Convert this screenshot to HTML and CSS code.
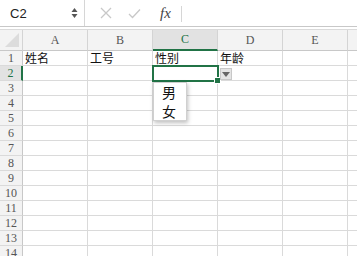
FILE: index.html
```html
<!DOCTYPE html>
<html>
<head>
<meta charset="utf-8">
<link rel="stylesheet" href="styles.css">
</head>
<body>
<div class="app">
  <div class="fbar">
    <div class="namebox">
      <span class="ref">C2</span>
      <span class="spin"><svg width="7" height="12" viewBox="0 0 7 12"><path d="M0.5 5 L3.5 1 L6.5 5 Z" fill="#555"/><path d="M0.5 7 L3.5 11 L6.5 7 Z" fill="#555"/></svg></span>
    </div>
    <div class="fbtns">
      <svg class="ic" width="12" height="12" viewBox="0 0 12 12"><path d="M1 1 L11 11 M11 1 L1 11" stroke="#c8c8c8" stroke-width="1.3" fill="none"/></svg>
      <svg class="ic" width="13" height="11" viewBox="0 0 13 11"><path d="M1 6 L4.5 9.5 L12 1.5" stroke="#c8c8c8" stroke-width="1.3" fill="none"/></svg>
      <span class="fx">fx</span>
    </div>
    <div class="finput"></div>
  </div>
  <div class="sheet">
    <div class="grid">
      <div class="corner"><span class="tri"></span></div>
      <div class="ch">A</div>
      <div class="ch">B</div>
      <div class="ch sel">C</div>
      <div class="ch">D</div>
      <div class="ch">E</div>
      <div class="ch last"></div>

      <div class="rh">1</div><div class="c">姓名</div><div class="c">工号</div><div class="c">性别</div><div class="c">年龄</div><div class="c"></div><div class="c last"></div>
      <div class="rh sel">2</div><div class="c"></div><div class="c"></div><div class="c"></div><div class="c"></div><div class="c"></div><div class="c last"></div>
      <div class="rh">3</div><div class="c"></div><div class="c"></div><div class="c"></div><div class="c"></div><div class="c"></div><div class="c last"></div>
      <div class="rh">4</div><div class="c"></div><div class="c"></div><div class="c"></div><div class="c"></div><div class="c"></div><div class="c last"></div>
      <div class="rh">5</div><div class="c"></div><div class="c"></div><div class="c"></div><div class="c"></div><div class="c"></div><div class="c last"></div>
      <div class="rh">6</div><div class="c"></div><div class="c"></div><div class="c"></div><div class="c"></div><div class="c"></div><div class="c last"></div>
      <div class="rh">7</div><div class="c"></div><div class="c"></div><div class="c"></div><div class="c"></div><div class="c"></div><div class="c last"></div>
      <div class="rh">8</div><div class="c"></div><div class="c"></div><div class="c"></div><div class="c"></div><div class="c"></div><div class="c last"></div>
      <div class="rh">9</div><div class="c"></div><div class="c"></div><div class="c"></div><div class="c"></div><div class="c"></div><div class="c last"></div>
      <div class="rh">10</div><div class="c"></div><div class="c"></div><div class="c"></div><div class="c"></div><div class="c"></div><div class="c last"></div>
      <div class="rh">11</div><div class="c"></div><div class="c"></div><div class="c"></div><div class="c"></div><div class="c"></div><div class="c last"></div>
      <div class="rh">12</div><div class="c"></div><div class="c"></div><div class="c"></div><div class="c"></div><div class="c"></div><div class="c last"></div>
      <div class="rh">13</div><div class="c"></div><div class="c"></div><div class="c"></div><div class="c"></div><div class="c"></div><div class="c last"></div>
      <div class="rh">14</div><div class="c"></div><div class="c"></div><div class="c"></div><div class="c"></div><div class="c"></div><div class="c last"></div>
    </div>
    <div class="selbox"><span class="handle"></span></div>
    <div class="ddbtn"><svg width="8" height="5" viewBox="0 0 8 5"><path d="M0 0 L8 0 L4 5 Z" fill="#666"/></svg></div>
    <div class="ddlist">
      <div class="opt">男</div>
      <div class="opt">女</div>
    </div>
  </div>
</div>
</body>
</html>
```
FILE: styles.css
```css
html, body {
  margin: 0;
  padding: 0;
  background: #fff;
}
.app {
  width: 357px;
  height: 256px;
  overflow: hidden;
  font-family: "Liberation Sans", Arial, sans-serif;
}
.fbar {
  display: flex;
  height: 26px;
  border-bottom: 1px solid #c8c8c8;
  box-sizing: content-box;
}
.namebox {
  width: 85px;
  border-right: 1px solid #d6d6d6;
  display: flex;
  align-items: center;
  justify-content: space-between;
  padding: 0 6px 0 10px;
  box-sizing: border-box;
}
.ref {
  font-size: 13px;
  color: #222;
}
.spin {
  display: flex;
  align-items: center;
}
.fbtns {
  width: 96px;
  display: flex;
  align-items: center;
  padding-left: 15px;
  gap: 16px;
  box-sizing: border-box;
}
.fx {
  font-family: "Liberation Serif", "Times New Roman", serif;
  font-style: italic;
  font-size: 15px;
  color: #444;
  margin-left: 3px;
}
.finput {
  flex: 1;
  margin: 6px 0 4px 0;
  border-left: 1px solid #d6d6d6;
}
.sheet {
  position: relative;
  margin-top: 2px;
  border-top: 1px solid #dadada;
}
.grid {
  display: grid;
  grid-template-columns: 23px repeat(5, 65px) 1fr;
  grid-template-rows: 21px repeat(14, 15px);
}
.corner, .ch {
  background: #f3f3f3;
  border-right: 1px solid #d4d4d4;
  border-bottom: 1px solid #c8c8c8;
  box-sizing: border-box;
}
.corner {
  position: relative;
}
.tri {
  position: absolute;
  right: 3px;
  bottom: 3px;
  width: 0;
  height: 0;
  border-left: 14px solid transparent;
  border-bottom: 14px solid #dcdcdc;
}
.ch {
  font-family: "Liberation Serif", "Times New Roman", serif;
  font-size: 12px;
  color: #555;
  display: flex;
  align-items: center;
  justify-content: center;
}
.ch.sel {
  background: #e2e2e2;
  color: #217346;
  border-bottom: 2px solid #217346;
}
.ch.last, .c.last {
  border-right: none;
}
.rh {
  background: #f3f3f3;
  border-right: 1px solid #c8c8c8;
  border-bottom: 1px solid #dadada;
  box-sizing: border-box;
  font-family: "Liberation Serif", "Times New Roman", serif;
  font-size: 12px;
  color: #555;
  display: flex;
  align-items: center;
  justify-content: center;
  line-height: 14px;
}
.rh.sel {
  background: #e2e2e2;
  color: #217346;
  border-right: 2px solid #217346;
}
.c {
  border-right: 1px solid #dadada;
  border-bottom: 1px solid #dadada;
  box-sizing: border-box;
  font-family: "Noto Sans CJK SC", sans-serif;
  font-size: 12px;
  line-height: 14px;
  color: #111;
  padding-left: 2px;
  white-space: nowrap;
}
.selbox {
  position: absolute;
  left: 152px;
  top: 35px;
  width: 67px;
  height: 17px;
  border: 2px solid #217346;
  box-sizing: border-box;
}
.handle {
  position: absolute;
  right: -4px;
  bottom: -4px;
  width: 5px;
  height: 5px;
  background: #217346;
  border: 1px solid #fff;
}
.ddbtn {
  position: absolute;
  left: 220px;
  top: 38px;
  width: 12px;
  height: 12px;
  background: #e4e4e4;
  border: 1px solid #c8c8c8;
  box-sizing: border-box;
  display: flex;
  align-items: center;
  justify-content: center;
}
.ddlist {
  position: absolute;
  left: 153px;
  top: 52px;
  width: 34px;
  height: 39px;
  box-sizing: border-box;
  background: #fff;
  border: 1px solid #d0d0d0;
  box-shadow: 1px 2px 4px rgba(0,0,0,0.25);
  padding: 0;
}
.opt {
  font-family: "Noto Sans CJK SC", sans-serif;
  font-size: 14px;
  line-height: 19px;
  color: #111;
  padding-left: 8px;
}
```
